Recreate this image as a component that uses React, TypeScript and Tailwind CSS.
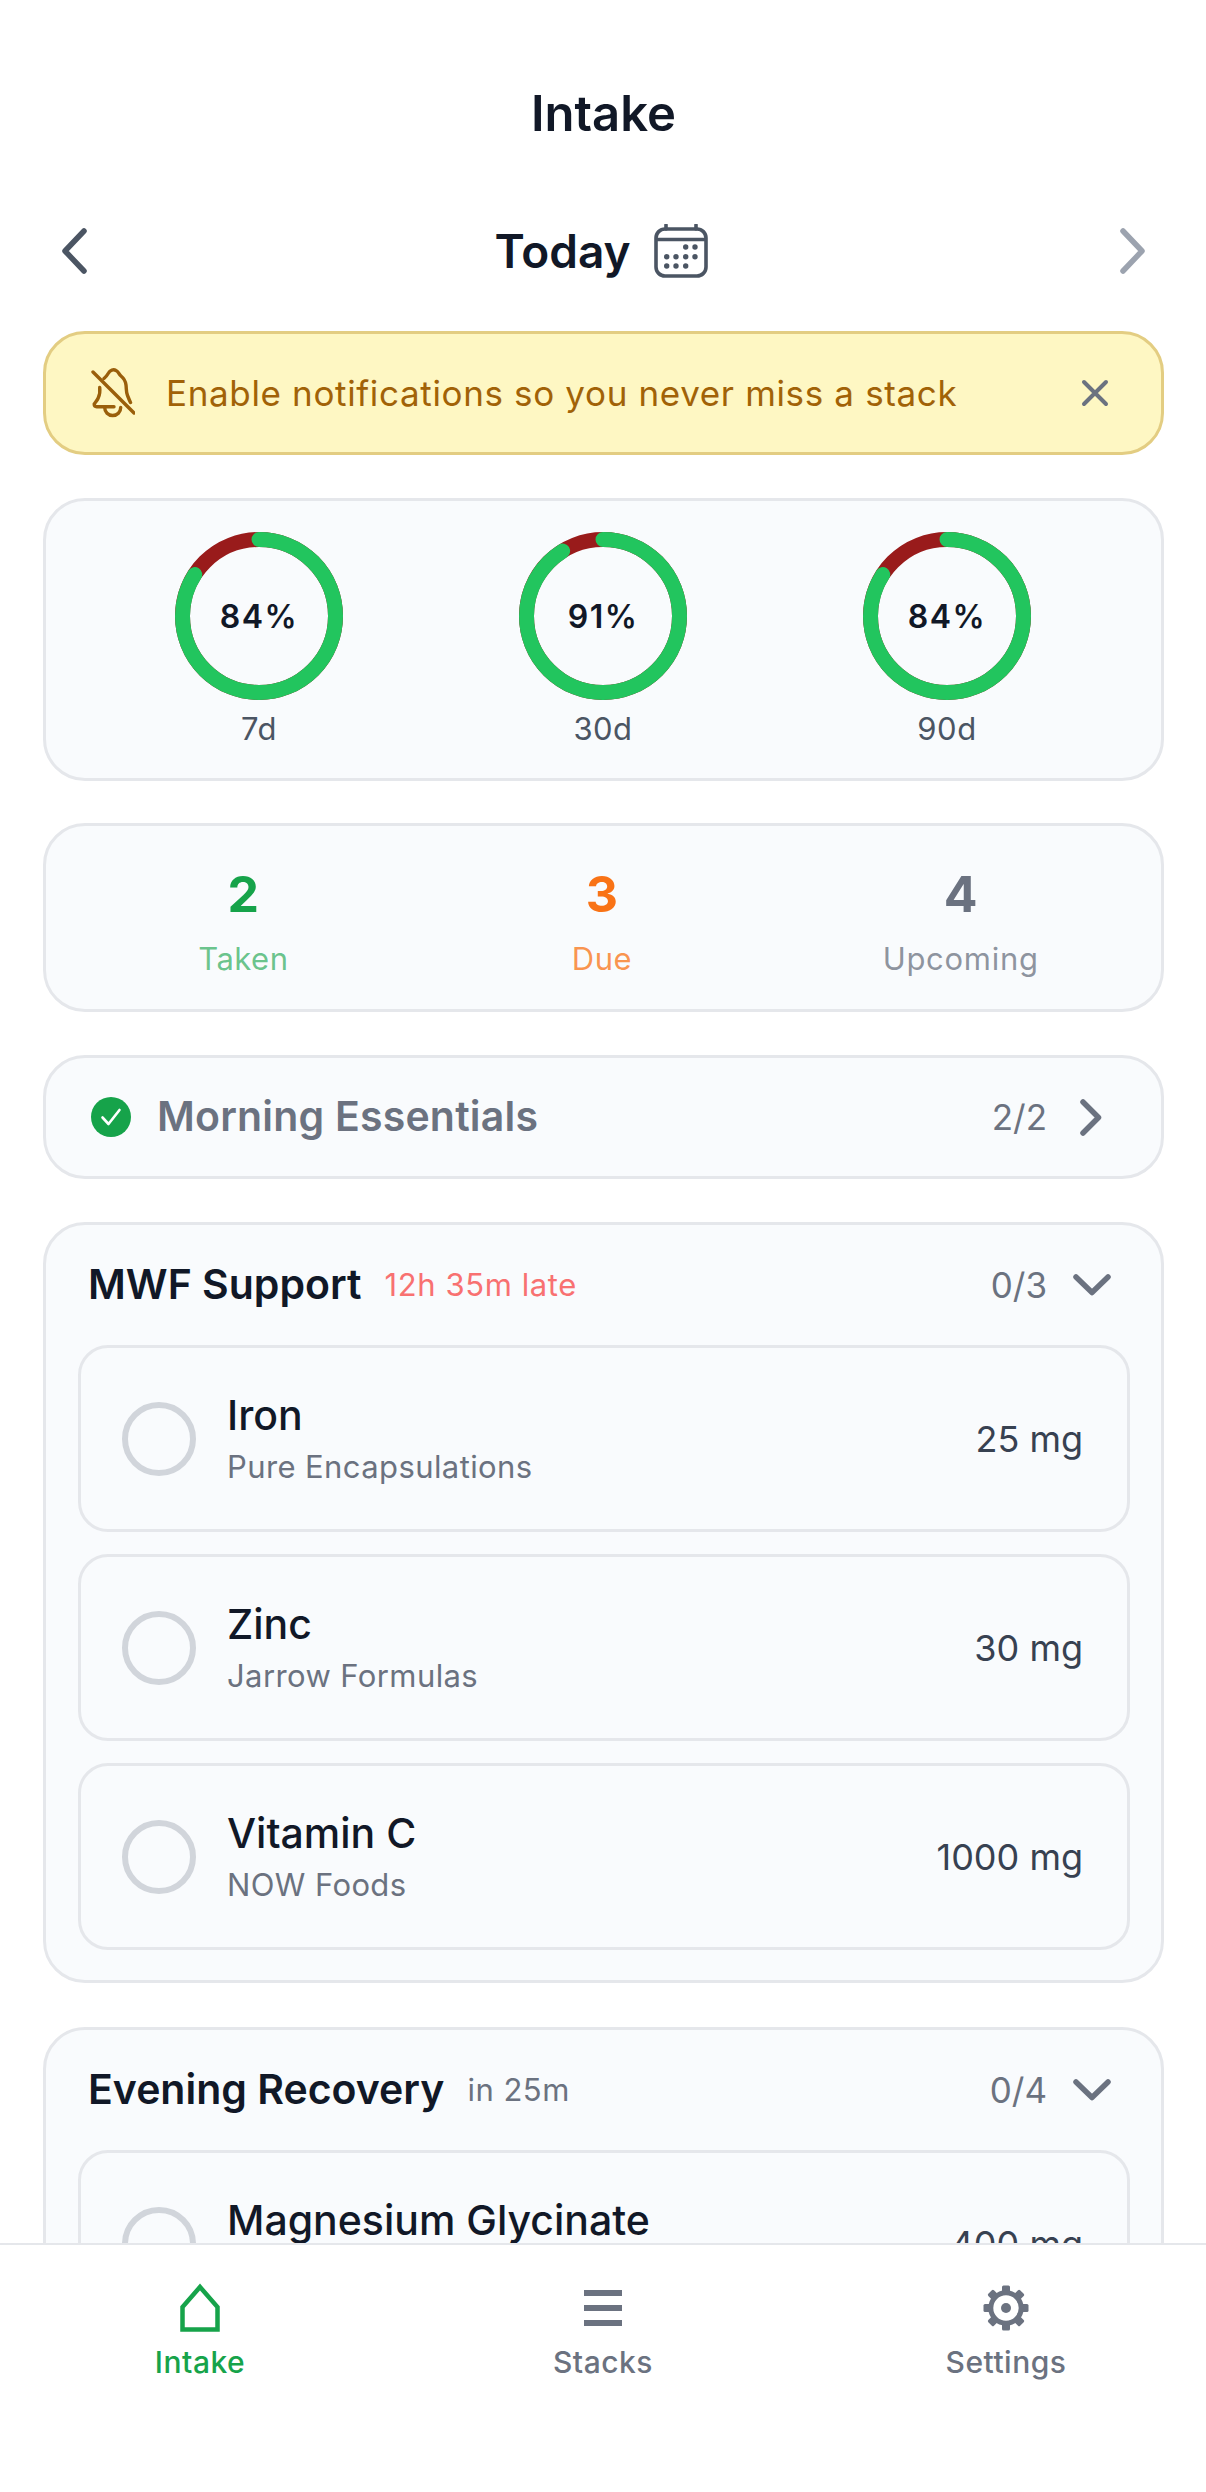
const items = [
  { name: "Iron", brand: "Pure Encapsulations", dose: "25 mg" },
  { name: "Zinc", brand: "Jarrow Formulas", dose: "30 mg" },
  { name: "Vitamin C", brand: "NOW Foods", dose: "1000 mg" },
];

const rings = [
  { pct: 84, label: "7d" },
  { pct: 91, label: "30d" },
  { pct: 84, label: "90d" },
];

function Ring({ pct, label }: { pct: number; label: string }) {
  const r = 76.5;
  const c = 2 * Math.PI * r;
  return (
    <div className="flex flex-col items-center">
      <div className="relative h-[168px] w-[168px]">
        <svg width="168" height="168" viewBox="0 0 168 168" className="-rotate-90">
          <circle cx="84" cy="84" r={r} fill="none" stroke="#991b1b" strokeWidth="15" />
          <circle
            cx="84"
            cy="84"
            r={r}
            fill="none"
            stroke="#22c55e"
            strokeWidth="15"
            strokeLinecap="round"
            strokeDasharray={`${(c * pct) / 100} ${c}`}
          />
        </svg>
        <div className="absolute inset-0 flex items-center justify-center pt-[2px] text-[32px] font-semibold tracking-[1.5px] text-[#111827]">
          {pct}%
        </div>
      </div>
      <span className="mt-[10px] text-[31px] leading-[38px] tracking-[0.5px] text-[#4b5563]">{label}</span>
    </div>
  );
}

function BellOffIcon() {
  return (
    <svg width="44" height="50" viewBox="0 0 44 50" fill="none" stroke="#9a5f0b" strokeWidth="3.4" strokeLinecap="round" strokeLinejoin="round" className="shrink-0">
      <path d="M2 4l41 41" />
      <path d="M13 10.5c2-1.5 3-3 4.5-5.5 1.5-3 5-4 7.5-2.5 3 1.5 2.5 3.5 5 5.5 3 2.5 4.500 4.500 5 9 .5 4 0 7 1.500 10.500 1 2.500 2 5 3 7" />
      <path d="M8.700 19.500c.5 4 0 7.500-1.500 10.500-1 2.500-3 4.500-4 6 0 1.500 1 2.700 2.500 2.700H23" />
      <path d="M13.700 39.500c0 4.500 3.500 8 8 8s8-3.500 8-8" />
    </svg>
  );
}

function CalendarIcon() {
  const dots = [
    [31.7, 23], [41, 23],
    [12.7, 32.7], [22, 32.7], [31.7, 32.7], [41, 32.7],
    [12.7, 42], [22, 42], [31.7, 42],
  ];
  return (
    <svg width="54" height="54" viewBox="0 0 54 54" fill="none" stroke="#4b5563" strokeWidth="3.6">
      <rect x="2" y="5" width="50" height="47" rx="9" />
      <path d="M2 15.5h50" />
      <path d="M12 1v4M42 1v4" strokeLinecap="round" />
      {dots.map(([x, y]) => (
        <circle key={`${x}-${y}`} cx={x} cy={y} r="2.7" fill="#4b5563" stroke="none" />
      ))}
    </svg>
  );
}

function CheckCircle() {
  return (
    <svg width="40" height="40" viewBox="0 0 40 40">
      <circle cx="20" cy="20" r="20" fill="#16a34a" />
      <path d="M11.5 20.5l6 6.5 11-14" fill="none" stroke="#fff" strokeWidth="2.6" strokeLinecap="round" strokeLinejoin="round" />
    </svg>
  );
}

function ChevronRight({ color = "#6b7280" }: { color?: string }) {
  return (
    <svg width="22" height="37" viewBox="0 0 22 37" fill="none" stroke={color} strokeWidth="5.5" strokeLinecap="round" strokeLinejoin="round">
      <path d="M3 3l15.5 15.5L3 34" />
    </svg>
  );
}

function ChevronDown() {
  return (
    <svg width="38" height="24" viewBox="0 0 38 24" fill="none" stroke="#6b7280" strokeWidth="5.5" strokeLinecap="round" strokeLinejoin="round">
      <path d="M3 4l16 15.5L35 4" />
    </svg>
  );
}

function GearIcon() {
  const teeth = [0, 45, 90, 135, 180, 225, 270, 315];
  return (
    <svg width="46" height="48" viewBox="-23 -24 46 48">
      {teeth.map((a) => (
        <rect key={a} x="-4" y="-22.5" width="8" height="9" rx="1.5" fill="#6b7280" transform={`rotate(${a})`} />
      ))}
      <circle r="15.2" fill="none" stroke="#6b7280" strokeWidth="5" />
      <circle r="5" fill="#6b7280" />
    </svg>
  );
}

function ItemRow({ name, brand, dose }: { name: string; brand: string; dose: string }) {
  return (
    <div className="flex h-[187px] items-center rounded-[30px] border-[3px] border-[#e5e7eb] bg-[#f9fbfd] pl-[41px] pr-[44px]">
      <div className="h-[74px] w-[74px] shrink-0 rounded-full border-[6px] border-[#d1d5db]" />
      <div className="ml-[31px] flex-1">
        <div className="text-[41px] font-medium leading-[48px] text-[#111827]">{name}</div>
        <div className="mt-[8px] text-[31px] leading-[40px] tracking-[0.4px] text-[#6b7280]">{brand}</div>
      </div>
      <span className="text-[36px] text-[#374151]">{dose}</span>
    </div>
  );
}

export default function App() {
  return (
    <div className="flex h-[2492px] w-[1206px] flex-col overflow-hidden bg-white font-[Inter,sans-serif]">
      <div className="min-h-0 flex-1 overflow-hidden pl-[43px] pr-[42px]">
        <h1 className="pt-[90px] text-center text-[49px] font-semibold leading-[48px] text-[#111827]">Intake</h1>

        <div className="mt-[73px] flex h-[80px] items-center justify-between px-[17px]">
          <svg width="28" height="48" viewBox="0 0 28 48" fill="none" stroke="#4b5563" strokeWidth="5.5" strokeLinecap="round" strokeLinejoin="round">
            <path d="M24 4L5 24l19 20" />
          </svg>
          <div className="-ml-[5px] flex items-center gap-[23px]">
            <span className="text-[46px] font-semibold text-[#111827]">Today</span>
            <CalendarIcon />
          </div>
          <svg width="28" height="48" viewBox="0 0 28 48" fill="none" stroke="#9ca3af" strokeWidth="5.5" strokeLinecap="round" strokeLinejoin="round">
            <path d="M4 4l19 20L4 44" />
          </svg>
        </div>

        <div className="mt-[40px] flex h-[124px] items-center rounded-[42px] border-[3px] border-[#e3cd82] bg-[#fef7c3] pl-[45px] pr-[52px]">
          <BellOffIcon />
          <span className="ml-[31px] flex-1 text-[35px] tracking-[0.65px] text-[#a16207]">Enable notifications so you never miss a stack</span>
          <svg width="28" height="28" viewBox="0 0 28 28" fill="none" stroke="#6b7280" strokeWidth="4" strokeLinecap="round">
            <path d="M3 3l22 22M25 3L3 25" />
          </svg>
        </div>

        <div className="mt-[43px] grid h-[283px] grid-cols-3 rounded-[42px] border-[3px] border-[#e5e7eb] bg-[#f9fbfd] pl-[41px] pr-[42px] pt-[31px]">
          {rings.map((ring) => (
            <Ring key={ring.label} pct={ring.pct} label={ring.label} />
          ))}
        </div>

        <div className="mt-[42px] grid h-[189px] grid-cols-3 items-center rounded-[42px] border-[3px] border-[#e5e7eb] bg-[#f9fbfd] pl-[18px] pr-[21px] pt-[8px] text-center">
          <div>
            <div className="text-[50px] font-bold leading-[60px] text-[#16a34a]">2</div>
            <div className="mt-[15px] text-[31px] leading-[40px] tracking-[0.5px] text-[#16a34a]/65">Taken</div>
          </div>
          <div>
            <div className="text-[50px] font-bold leading-[60px] text-[#f97316]">3</div>
            <div className="mt-[15px] text-[31px] leading-[40px] tracking-[0.5px] text-[#f97316]/75">Due</div>
          </div>
          <div>
            <div className="text-[50px] font-bold leading-[60px] text-[#6b7280]">4</div>
            <div className="mt-[15px] text-[31px] leading-[40px] tracking-[0.7px] text-[#6b7280]/75">Upcoming</div>
          </div>
        </div>

        <div className="mt-[43px] flex h-[124px] items-center rounded-[42px] border-[3px] border-[#e5e7eb] bg-[#f9fbfd] pl-[45px] pr-[59px]">
          <CheckCircle />
          <span className="ml-[26px] flex-1 text-[41px] font-semibold tracking-[0.2px] text-[#6b7280]">Morning Essentials</span>
          <span className="text-[35px] text-[#6b7280]">2/2</span>
          <div className="ml-[33px]">
            <ChevronRight />
          </div>
        </div>

        <div className="mt-[43px] rounded-[42px] border-[3px] border-[#e5e7eb] bg-[#f9fbfd] pb-[30px] pl-[32px] pr-[31px]">
          <div className="flex h-[120px] items-center pl-[10px] pr-[19px]">
            <span className="text-[41px] font-semibold text-[#111827]">MWF Support</span>
            <span className="ml-[23px] flex-1 text-[31px] tracking-[0.6px] text-[#f87171]">12h 35m late</span>
            <span className="text-[35px] text-[#6b7280]">0/3</span>
            <div className="ml-[26px] flex">
              <ChevronDown />
            </div>
          </div>
          <div className="flex flex-col gap-[22px]">
            {items.map((item) => (
              <ItemRow key={item.name} name={item.name} brand={item.brand} dose={item.dose} />
            ))}
          </div>
        </div>

        <div className="mt-[44px] rounded-[42px] border-[3px] border-[#e5e7eb] bg-[#f9fbfd] pb-[30px] pl-[32px] pr-[31px]">
          <div className="flex h-[120px] items-center pl-[10px] pr-[19px]">
            <span className="text-[41px] font-semibold text-[#111827]">Evening Recovery</span>
            <span className="ml-[23px] flex-1 text-[31px] tracking-[0.5px] text-[#6b7280]">in 25m</span>
            <span className="text-[35px] text-[#6b7280]">0/4</span>
            <div className="ml-[26px] flex">
              <ChevronDown />
            </div>
          </div>
          <ItemRow name="Magnesium Glycinate" brand={"\u00a0"} dose="400 mg" />
        </div>
      </div>

      <nav className="grid h-[249px] shrink-0 grid-cols-[400px_406px_400px] border-t-2 border-[#e5e7eb] bg-white pt-[38px]">
        <div className="flex flex-col items-center">
          <div className="flex h-[50px] items-center">
            <svg width="40" height="50" viewBox="0 0 40 50" fill="none" stroke="#16a34a" strokeWidth="4.5">
              <path d="M20 4L37.5 24v22.5h-35V24z" strokeLinejoin="miter" />
            </svg>
          </div>
          <span className="mt-[7px] text-[30px] font-medium tracking-[0.5px] text-[#16a34a]">Intake</span>
        </div>
        <div className="flex flex-col items-center">
          <div className="flex h-[50px] flex-col items-center justify-center gap-[9px]">
            <div className="h-[6px] w-[38px] bg-[#6b7280]" />
            <div className="h-[6px] w-[38px] bg-[#6b7280]" />
            <div className="h-[6px] w-[38px] bg-[#6b7280]" />
          </div>
          <span className="mt-[7px] text-[30px] font-medium tracking-[0.5px] text-[#6b7280]">Stacks</span>
        </div>
        <div className="flex flex-col items-center">
          <div className="flex h-[50px] items-center">
            <GearIcon />
          </div>
          <span className="mt-[7px] text-[30px] font-medium tracking-[0.5px] text-[#6b7280]">Settings</span>
        </div>
      </nav>
    </div>
  );
}
